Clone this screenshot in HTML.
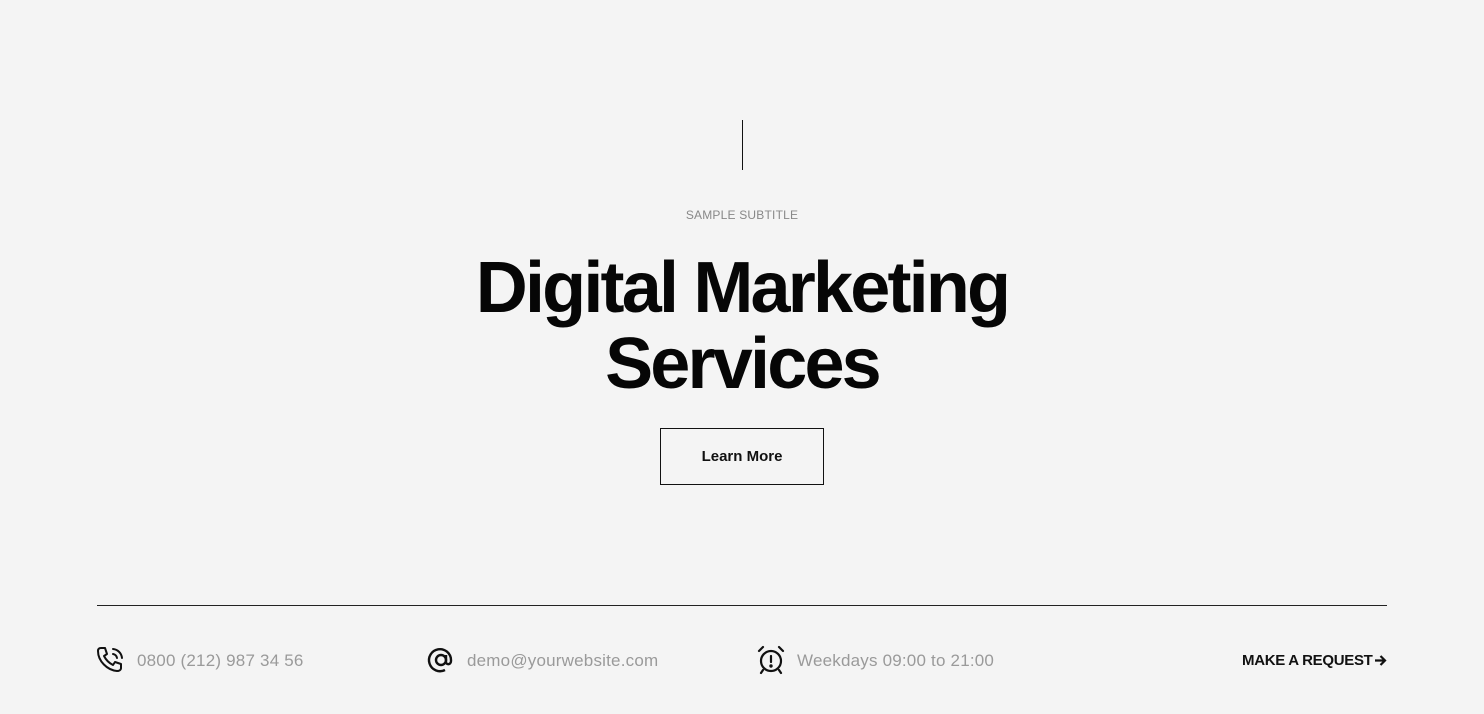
<!DOCTYPE html>
<html><head><style>
body{margin:0;width:1484px;height:714px;background:#f4f4f4;font-family:"Liberation Sans",sans-serif;position:relative;overflow:hidden}
.a{position:absolute}
.vl{left:742px;top:120px;width:1px;height:50px;background:#111}
.sub{left:0;width:1484px;top:208px;text-align:center;font-size:12px;color:#888;letter-spacing:0.2px}
h1{position:absolute;margin:0;left:0;width:1484px;top:250px;text-align:center;font-size:72px;line-height:76px;letter-spacing:-2.8px;font-weight:bold;color:#060606}
.btn{left:660px;top:428px;width:162px;height:55px;border:1px solid #111;text-align:center;line-height:56px;font-size:15px;font-weight:bold;color:#111}
.hr{left:97px;top:605px;width:1290px;height:1px;background:#222}
.t{top:651px;font-size:17px;color:#9a9a9a;line-height:20px;letter-spacing:0.2px}
.req{left:1242px;top:652px;font-size:15px;font-weight:bold;color:#111;line-height:18px;letter-spacing:-0.3px}
</style></head><body>
<div class="a vl"></div>
<div class="a sub">SAMPLE SUBTITLE</div>
<h1>Digital Marketing<br>Services</h1>
<div class="a btn">Learn More</div>
<div class="a hr"></div>
<svg class="a" style="left:96px;top:645px" width="30" height="30" viewBox="0 0 30 30" fill="none" stroke="#111" stroke-width="2" stroke-linecap="round" stroke-linejoin="round"><path d="M5 3l4 0 2 6-3 2c2 4 5 7 9 9l2-3 6 2v4c0 2-2 3-4 3C11 25 2 16 2 6c0-2 1-3 3-3z"/><path d="M17 9a5 5 0 0 1 4 4"/><path d="M17 4a10 10 0 0 1 9 9"/></svg>
<div class="a t" style="left:137px">0800 (212) 987 34 56</div>
<svg class="a" style="left:426px;top:646px" width="30" height="30" viewBox="0 0 30 30" fill="none" stroke="#111" stroke-width="2.4"><circle cx="15" cy="14" r="5"/><path d="M20 9v7c0 3 5 3 5-1v-1A11 11 0 1 0 19 24"/></svg>
<div class="a t" style="left:467px">demo@yourwebsite.com</div>
<svg class="a" style="left:756px;top:645px" width="30" height="30" viewBox="0 0 30 30" fill="none" stroke="#111" stroke-width="2.2" stroke-linecap="round"><circle cx="15" cy="16" r="10"/><path d="M15 11v6"/><path d="M3 6l4-4M27 6l-4-4M7 25l-2 3M23 25l2 3"/><circle cx="15" cy="21" r="0.6" fill="#111"/></svg>
<div class="a t" style="left:797px">Weekdays 09:00 to 21:00</div>
<div class="a req">MAKE A REQUEST</div>
<svg class="a" style="left:1374px;top:654px" width="13" height="13" viewBox="0 0 13 13" fill="none" stroke="#111" stroke-width="2.2"><path d="M1 6.5h10M6.5 2l4.5 4.5-4.5 4.5"/></svg>
</body></html>
